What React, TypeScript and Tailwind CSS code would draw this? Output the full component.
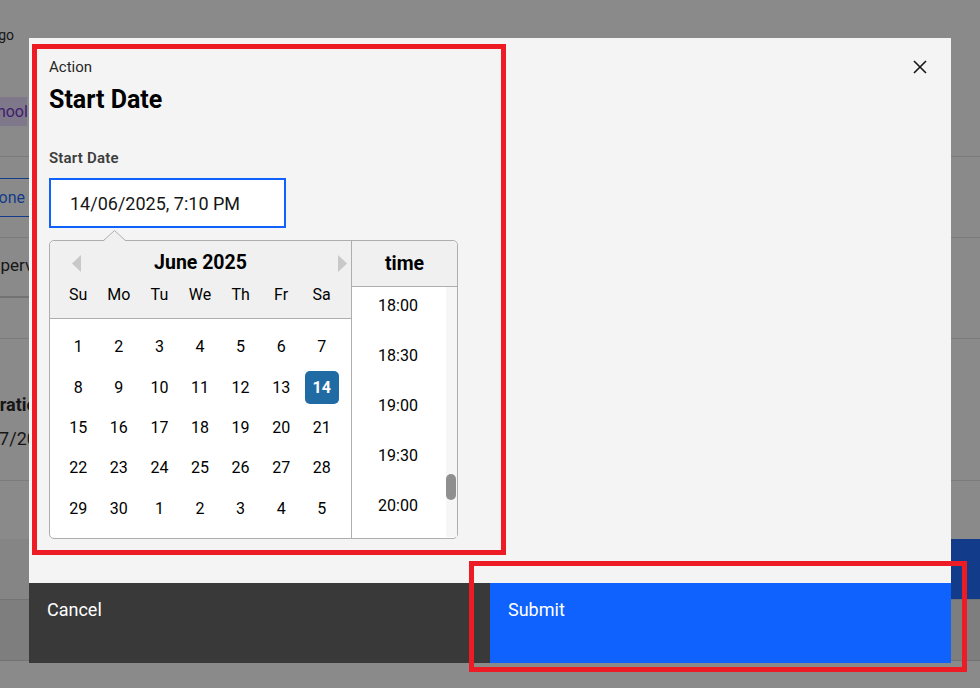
const WEEK_DAYS = ['Su', 'Mo', 'Tu', 'We', 'Th', 'Fr', 'Sa'];

const WEEKS = [
  ['1', '2', '3', '4', '5', '6', '7'],
  ['8', '9', '10', '11', '12', '13', '14'],
  ['15', '16', '17', '18', '19', '20', '21'],
  ['22', '23', '24', '25', '26', '27', '28'],
  ['29', '30', '1', '2', '3', '4', '5'],
];

const TIMES = ['18:00', '18:30', '19:00', '19:30', '20:00', '20:30'];

const FONT = "font-['Roboto','Liberation_Sans',sans-serif]";

function BackgroundPage() {
  // the page behind the modal; only its edges show
  return (
    <div className="flex min-h-[688px] w-full flex-col bg-white text-[14px] text-[#161616]">
      <div className="flex h-[157px] flex-col border-b border-[#e0e0e0]">
        <div className="mt-[26px] -ml-[44px] h-[18px] leading-[18px]">Flamingo</div>
        <div className="mt-[53px] -ml-[24px] flex h-[29px] w-[51px] items-center bg-[#e8daff] pl-[3px] text-[16px] text-[#6929c4]">
          School
        </div>
      </div>
      <div className="flex h-[81px] flex-col border-b border-[#e0e0e0]">
        <div className="mt-[21px] -ml-[14px] flex h-[39px] w-[60px] items-center border-y border-[#0f62fe] pl-[2px] text-[16px] text-[#0f62fe]">
          Done
        </div>
      </div>
      <div className="flex h-[101px] flex-col border-b border-[#e0e0e0]">
        <div className="mt-[17px] -ml-[19px] text-[17px] leading-[20px]">Supervisor</div>
        <div className="mt-[21px] h-[2px] w-[29px] bg-[#d0d0d0]" />
      </div>
      <div className="flex h-[142px] flex-col border-b border-[#e0e0e0]">
        <div className="mt-[54px] -ml-[22px] text-[18px] font-bold leading-[24px]">Duration</div>
        <div className="mt-[10px] -ml-[11px] text-[18px] leading-[24px]">17/2025</div>
      </div>
      <div className="h-[58px]" />
      <div className="flex h-[61px] justify-between border-b border-[#d0d0d0] bg-[#f4f4f4]">
        <div />
        <div className="w-[29px] bg-[#0f62fe]" />
      </div>
      <div className="h-[61px] border-b border-[#d0d0d0] bg-[#e6e6e6]" />
      <div className="flex-1" />
    </div>
  );
}

function ArrowLeft() {
  return (
    <svg width="9" height="17" viewBox="0 0 9 17">
      <path d="M9 0 L0 8.5 L9 17 Z" fill="#c8c8c8" />
    </svg>
  );
}

function ArrowRight() {
  return (
    <svg width="9" height="17" viewBox="0 0 9 17">
      <path d="M0 0 L9 8.5 L0 17 Z" fill="#c8c8c8" />
    </svg>
  );
}

function DatePickerPopup() {
  return (
    <div className="relative mt-[12px] flex w-[409px] rounded-[5px] border border-[#aeaeae] bg-white text-black">
      <svg className="absolute left-[53px] top-[-11px]" width="23" height="12" viewBox="0 0 23 12">
        <path d="M0 11.5 L11.5 0.5 L23 11.5 Z" fill="#f0f0f0" />
        <path d="M0 11 L11.5 0.5 L23 11" fill="none" stroke="#aeaeae" strokeWidth="1" />
      </svg>

      <div className="flex w-[301px] flex-col">
        <div className="flex flex-col rounded-tl-[5px] border-b border-[#aeaeae] bg-[#f0f0f0]">
          <div className="grid h-[44px] grid-cols-[1fr_auto_1fr] items-center">
            <div className="flex pl-[22px]">
              <ArrowLeft />
            </div>
            <span className="text-[19.5px] font-bold leading-[24px]">June 2025</span>
            <div className="flex justify-end pr-[4px]">
              <ArrowRight />
            </div>
          </div>
          <div className="grid h-[20px] grid-cols-7 pl-[8px] pr-[9px] text-[16px] leading-[20px]">
            {WEEK_DAYS.map(d => (
              <span key={d} className="text-center">{d}</span>
            ))}
          </div>
          <div className="h-[13px]" />
        </div>
        <div className="grid grid-cols-7 pb-[9px] pl-[8px] pr-[9px] pt-[8px] text-[16px]">
          {WEEKS.flat().map((d, i) => (
            <div key={i} className="flex h-[40.4px] items-center justify-center">
              {i === 13 ? (
                <span className="flex h-[33px] w-[34px] items-center justify-center rounded-[5px] bg-[#216ba5] font-bold text-white">
                  {d}
                </span>
              ) : (
                <span>{d}</span>
              )}
            </div>
          ))}
        </div>
      </div>

      <div className="flex w-[106px] flex-col border-l border-[#aeaeae]">
        <div className="flex h-[46px] items-center justify-center rounded-tr-[5px] border-b border-[#aeaeae] bg-[#f0f0f0] pt-[1px] text-[19.5px] font-bold leading-[24px]">
          time
        </div>
        <div className="flex h-[250px] overflow-hidden">
          <div className="flex flex-1 flex-col">
            <div className="-mt-[6px] flex flex-col pr-[2px]">
              {TIMES.map(t => (
                <div key={t} className="flex h-[50px] shrink-0 items-center justify-center text-[16px]">
                  {t}
                </div>
              ))}
            </div>
          </div>
          <div className="flex w-[11px] flex-col bg-[#f6f6f6]">
            <div className="mt-[187px] h-[26px] w-[10px] rounded-full bg-[#8f8f8f]" />
          </div>
        </div>
      </div>
    </div>
  );
}

export default function App() {
  return (
    <div className={`relative h-[688px] w-[980px] overflow-hidden ${FONT}`}>
      <BackgroundPage />
      <div className="absolute inset-0 bg-[rgba(22,22,22,0.5)]" />

      <div className="absolute left-[29px] top-[38px] flex h-[625px] w-[922px] flex-col bg-[#f4f4f4] text-[#161616]">
        <button className="absolute right-[24px] top-[22px] flex h-[14px] w-[14px] items-center justify-center">
          <svg width="14" height="14" viewBox="0 0 14 14">
            <path d="M1 1 L13 13 M13 1 L1 13" stroke="#161616" strokeWidth="1.6" />
          </svg>
        </button>

        <div className="flex flex-1 flex-col pl-[20px] pt-[20px]">
          <p className="text-[15px] leading-[18px] text-[#262626]">Action</p>
          <h2 className="mt-[10px] text-[25px] font-bold leading-[28px] text-black">Start Date</h2>

          <label className="mt-[35px] text-[15px] font-semibold leading-[18px] tracking-[0.2px] text-[#3d3d3d]">
            Start Date
          </label>
          <div className="mt-[11px] flex h-[50px] w-[237px] items-center border-2 border-[#0f62fe] bg-white pl-[19px] text-[18px] text-[#161616]">
            14/06/2025, 7:10 PM
          </div>

          <DatePickerPopup />
        </div>

        <div className="flex h-[80px] text-[18px] text-white">
          <button className="flex flex-1 items-start bg-[#393939] pl-[18px] pt-[17px] leading-[20px]">Cancel</button>
          <button className="flex flex-1 items-start bg-[#0f62fe] pl-[18px] pt-[17px] leading-[20px]">Submit</button>
        </div>
      </div>

      <div className="pointer-events-none absolute left-[32px] top-[44px] h-[511px] w-[474px] border-[5px] border-[#ed1c24]" />
      <div className="pointer-events-none absolute left-[469px] top-[561px] h-[111px] w-[498px] border-[5px] border-[#ed1c24]" />
    </div>
  );
}
